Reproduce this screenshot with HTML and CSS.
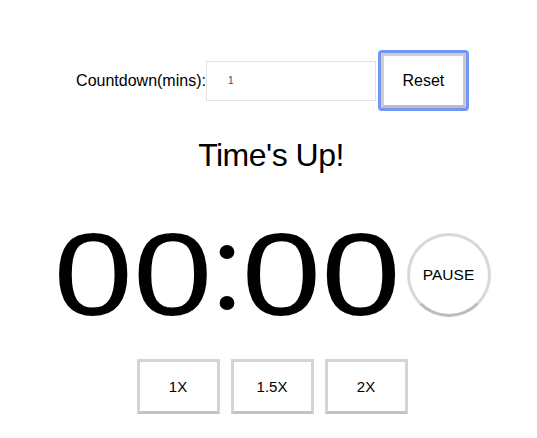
FILE: index.html
```html
<!DOCTYPE html>
<html lang="en">
<head>
<meta charset="utf-8">
<title>Countdown</title>
<link rel="stylesheet" href="styles.css">
</head>
<body>
<div class="app">
  <div class="controls">
    <label class="label" for="mins">Countdown(mins):</label>
    <input class="mins" id="mins" type="text" value="1">
    <button class="btn reset">Reset</button>
  </div>
  <h1 class="title">Time's Up!</h1>
  <div class="timer">
    <div class="digits"><span>00</span><span class="colon">:</span><span>00</span></div>
    <button class="pause">PAUSE</button>
  </div>
  <div class="speeds">
    <button class="btn speed">1X</button>
    <button class="btn speed">1.5X</button>
    <button class="btn speed">2X</button>
  </div>
</div>
</body>
</html>
```
FILE: styles.css
```css
html, body {
  margin: 0;
  background: #fff;
}
body {
  font-family: "Liberation Sans", Arial, Helvetica, sans-serif;
  color: #000;
}
.app {
  display: flex;
  flex-direction: column;
  align-items: center;
  padding-top: 50px;
  padding-left: 5px;
}
.controls {
  display: flex;
  align-items: center;
  height: 61px;
}
.label {
  font-size: 16px;
}
.mins {
  box-sizing: border-box;
  width: 170px;
  height: 40px;
  border: 1px solid #e2e2e2;
  padding: 0 0 0 21px;
  font-family: "Liberation Sans", Arial, sans-serif;
  font-size: 10px;
  color: #444;
  outline: none;
  margin: 0;
}
.btn {
  box-sizing: border-box;
  background: #fff;
  border: 3px solid #d4d4d4;
  border-bottom-color: #c2c2c2;
  font-family: "Liberation Sans", Arial, sans-serif;
  color: #000;
  padding: 0;
  margin: 0;
  cursor: pointer;
}
.reset {
  width: 85px;
  height: 55px;
  font-size: 16px;
  margin-left: 5px;
  border-color: #cfcfcf #c9c9c9 #bdbdbd #cfcfcf;
  outline: 3px solid #7196f6;
  outline-offset: 0;
  border-radius: 1px;
}
.title {
  margin: 24px 0 0;
  font-size: 32px;
  font-weight: normal;
  letter-spacing: -0.5px;
  line-height: 40px;
  height: 40px;
}
.timer {
  display: flex;
  align-items: center;
  margin-top: 42px;
}
.digits {
  font-size: 116px;
  line-height: 116px;
  transform: scaleX(1.23);
  margin: 0 38px 0 35px;
  white-space: nowrap;
}
.colon {
  display: inline-block;
  position: relative;
  width: 24px;
  height: 116px;
  font-size: 40px;
  line-height: 116px;
  text-align: center;
  vertical-align: top;
  color: transparent;
}
.colon::before,
.colon::after {
  content: "";
  position: absolute;
  left: 6px;
  width: 12px;
  height: 14px;
  border-radius: 50%;
  background: #000;
}
.colon::before {
  top: 28px;
}
.colon::after {
  top: 79px;
}
.pause {
  box-sizing: border-box;
  width: 84px;
  height: 84px;
  border-radius: 50%;
  background: #fff;
  border: 3px solid #d8d8d8;
  border-bottom-color: #bdbdbd;
  font-family: "Liberation Sans", Arial, sans-serif;
  font-size: 15.5px;
  color: #000;
  padding: 0;
}
.speeds {
  display: flex;
  gap: 11px;
  margin-top: 26px;
  margin-left: 2px;
}
.speed {
  width: 83px;
  height: 55px;
  font-size: 15px;
}
```
